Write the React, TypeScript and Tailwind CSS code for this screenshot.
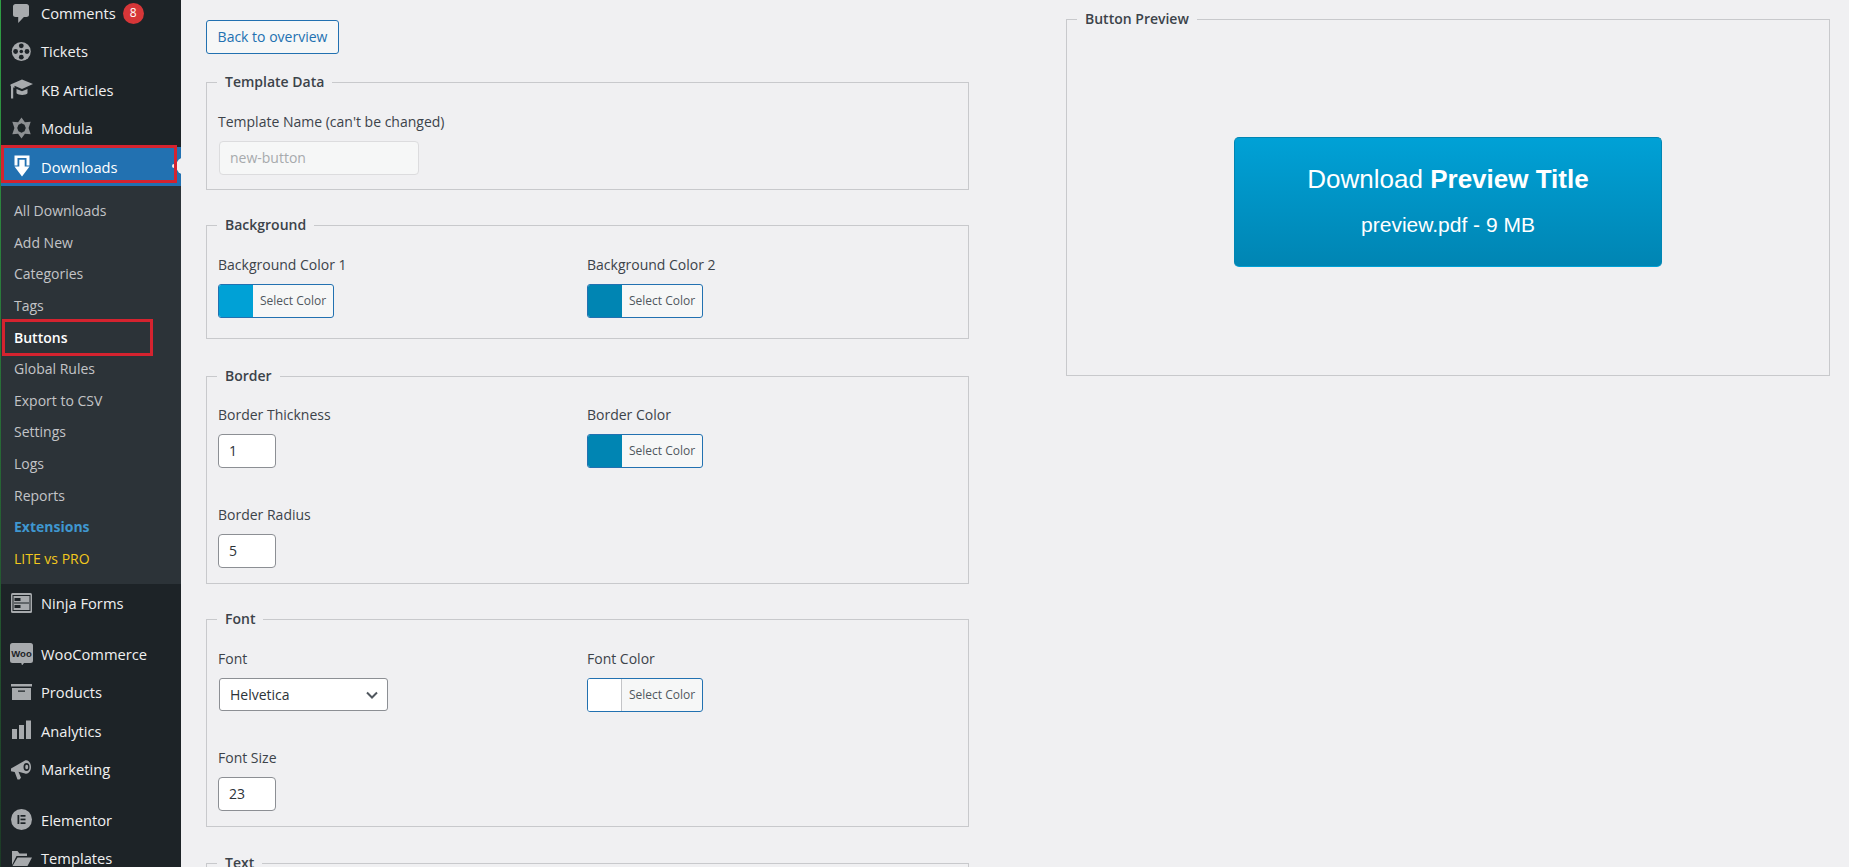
import React from "react";

const G = "#a7aaad";
const D = "#1d2327";

const I = ({ children }: { children: React.ReactNode }) => (
  <svg width="23" height="23" viewBox="0 0 23 23" className="shrink-0">
    {children}
  </svg>
);

const icons: Record<string, React.ReactNode> = {
  comments: (
    <path fill={G} d="M5.5 2h11c1.3 0 2.5 1 2.5 2.3v8.4c0 1.3-1.2 2.3-2.5 2.3h-2.6l-5.7 6v-6H5.500C4.200 15 3 14 3 12.700V4.300C3 3 4.200 2 5.500 2z" />
  ),
  tickets: (
    <g>
      <circle cx="11.300" cy="11.500" r="9.500" fill={G} />
      <circle cx="11.300" cy="11.500" r="1.800" fill={D} />
      <circle cx="11.300" cy="5.800" r="2.400" fill={D} />
      <circle cx="11.300" cy="17.200" r="2.400" fill={D} />
      <circle cx="5.600" cy="11.500" r="2.400" fill={D} />
      <circle cx="17" cy="11.500" r="2.400" fill={D} />
    </g>
  ),
  kb: (
    <g fill={G}>
      <path d="M0.500 6.500 12 1.500l11 4.500-11 5-7.500-3.200V10L0.500 8z" />
      <path d="M1 7.500h2.200v13H1z" />
      <path d="M6.500 11v4.200c2 2.300 9.500 2.300 11 0V11L12 13.300z" />
    </g>
  ),
  modula: (
    <path
      fill="#8d9093"
      fillRule="evenodd"
      d="M11.500 0.500l3.400 4.700 5.800-.4-2.100 6.200 2.100 6.200-5.800-.4-3.400 4.700-3.400-4.700-5.800.4 2.100-6.200-2.100-6.200 5.800.4zM8.500 7.800l-1.300 3.200 1.300 3.200 3 1.500 3-1.500 1.300-3.200-1.300-3.200-3-1.500z"
    />
  ),
  download: (
    <g fill="#fff">
      <path d="M4.500 .5h15v10h-3V3H7.500v7.500h-3z" />
      <path d="M9.300 4.800h5.400v6.700h4.800L12 21.500 4.500 11.500h4.800z" />
    </g>
  ),
  ninja: (
    <g>
      <rect x="1" y="1" width="21" height="20" rx="1.500" fill={G} />
      <rect x="3" y="3.500" width="17" height="15" fill="none" stroke={D} strokeWidth="1" />
      <rect x="4.500" y="6" width="6" height="3" fill={D} />
      <rect x="4.500" y="13" width="6" height="3" fill={D} />
      <rect x="4" y="10.500" width="15" height="1" fill={D} />
    </g>
  ),
  woo: (
    <g>
      <path fill={G} d="M2.500 1h18A2.500 2.500 0 0 1 23 3.500v15a2.500 2.500 0 0 1-2.500 2.500H14l-2 2.500-.7-2.500H2.500A2.500 2.500 0 0 1 0 18.500v-15A2.500 2.500 0 0 1 2.500 1z" />
      <text x="11.500" y="15" textAnchor="middle" fontSize="9.500" fontWeight="700" fill={D} fontFamily="'Liberation Sans', sans-serif">
        Woo
      </text>
    </g>
  ),
  products: (
    <g fill={G}>
      <rect x="1" y="3" width="21" height="2.500" />
      <path d="M2 7h19v12H2zM8 9.500v1.300h7V9.500z" fillRule="evenodd" />
    </g>
  ),
  analytics: (
    <g fill={G}>
      <rect x="2" y="10" width="5" height="10" />
      <rect x="9" y="6" width="5" height="14" />
      <rect x="16" y="1.500" width="5" height="18.500" />
    </g>
  ),
  marketing: (
    <g>
      <path fill={G} d="M1 10.500 15 2.500c3-1 6 2 6 6.500s-3 7.500-6 6.500l-6.500-1.700 2.500 6-1.500 1.700H7.500l-2.800-7.500-3.700-.8z" />
      <ellipse cx="16.500" cy="9" rx="3" ry="4" fill={D} />
      <ellipse cx="16.700" cy="9" rx="1.500" ry="2.200" fill={G} />
    </g>
  ),
  elementor: (
    <g>
      <circle cx="11.500" cy="11.500" r="10.500" fill={G} />
      <rect x="7.500" y="7" width="1.800" height="9" fill={D} />
      <rect x="10.500" y="7" width="5" height="1.700" fill={D} />
      <rect x="10.500" y="10.600" width="5" height="1.700" fill={D} />
      <rect x="10.500" y="14.300" width="5" height="1.700" fill={D} />
    </g>
  ),
  templates: (
    <g fill={G}>
      <path d="M2 18V4h5.500l2 2.500H17V9H6.500z" />
      <path d="M7.500 10.500H22L17.500 19H2.500z" />
    </g>
  ),
};

function Item({ icon, label, badge, active }: { icon: string; label: string; badge?: string; active?: boolean }) {
  return (
    <div className={`relative flex h-[38.4px] shrink-0 items-center pl-[10px] text-[14.700px] ${active ? "bg-[#2271b1] text-white" : "text-[#f0f0f1]"}`}>
      <I>{icons[icon]}</I>
      <span className="ml-[8px]">{label}</span>
      {badge && (
        <span className="ml-[7px] flex h-[21px] w-[21px] items-center justify-center rounded-full bg-[#d63638] text-[12px] text-white">
          {badge}
        </span>
      )}
      {active && (
        <>
          <span className="absolute left-[172px] top-[17px] h-[4px] w-[4px] rounded-full bg-[#f0f0f2]" />
          <span className="absolute left-[176px] top-[10px] h-[18px] w-[10px] rounded-l-full bg-[#f0f0f2]" />
          <span className="absolute left-[1px] top-[-2px] h-[38px] w-[176px] border-[3px] border-[#d5232f]" />
        </>
      )}
    </div>
  );
}

function Sub({ label, className = "text-[#c3c4c7]", boxed }: { label: string; className?: string; boxed?: boolean }) {
  return (
    <div className={`relative flex h-[31.640px] items-center pl-[14px] ${className}`}>
      {label}
      {boxed && <span className="absolute left-[2px] top-[-2px] h-[37px] w-[151px] border-[3px] border-[#d5232f]" />}
    </div>
  );
}

function Box({ title, className = "", children }: { title: string; className?: string; children: React.ReactNode }) {
  return (
    <fieldset className={`border border-[#c8c9cc] px-[11px] ${className}`}>
      <legend className="ml-[-1px] h-[20px] px-[8px] text-[14px] font-semibold leading-[20px] text-[#3c434a]">{title}</legend>
      {children}
    </fieldset>
  );
}

const Label = ({ children }: { children: React.ReactNode }) => (
  <div className="h-[20px] text-[14px] leading-[20px] text-[#3c434a]">{children}</div>
);

function Swatch({ color, white }: { color: string; white?: boolean }) {
  return (
    <div className="mt-[9px] flex h-[34px] w-[116px] overflow-hidden rounded-[3px] border border-[#2271b1] bg-[#f6f7f7]">
      <div className={`h-full w-[34px] ${white ? "border-r border-[#c3c4c7]" : ""}`} style={{ background: color }} />
      <div className="flex-1 pl-[7px] text-[12px] leading-[32px] text-[#50575e]">Select Color</div>
    </div>
  );
}

const NumberBox = ({ value }: { value: string }) => (
  <div className="mt-[9px] h-[34px] w-[58px] rounded-[4px] border border-[#8c8f94] bg-white pl-[10px] text-[14px] leading-[32px] text-[#2c3338]">
    {value}
  </div>
);

export default function App() {
  return (
    <div className="relative flex h-[867px] w-[1849px] overflow-hidden bg-[#f0f0f2] font-['Open_Sans',sans-serif] text-[14px]">
      <aside className="relative w-[181px] shrink-0 bg-[#1d2327]">
        <div className="mt-[-6.200px] flex flex-col">
          <Item icon="comments" label="Comments" badge="8" />
          <Item icon="tickets" label="Tickets" />
          <Item icon="kb" label="KB Articles" />
          <Item icon="modula" label="Modula" />
          <Item icon="download" label="Downloads" active />
          <div className="bg-[#2c3338] pb-[10px] pt-[9px] text-[14px]">
            <Sub label="All Downloads" />
            <Sub label="Add New" />
            <Sub label="Categories" />
            <Sub label="Tags" />
            <Sub label="Buttons" className="font-semibold text-white" boxed />
            <Sub label="Global Rules" />
            <Sub label="Export to CSV" />
            <Sub label="Settings" />
            <Sub label="Logs" />
            <Sub label="Reports" />
            <Sub label="Extensions" className="font-bold text-[#3f97d0]" />
            <Sub label="LITE vs PRO" className="text-[#f2c81d]" />
          </div>
          <Item icon="ninja" label="Ninja Forms" />
          <div className="mt-[12px]">
            <Item icon="woo" label="WooCommerce" />
          </div>
          <Item icon="products" label="Products" />
          <Item icon="analytics" label="Analytics" />
          <Item icon="marketing" label="Marketing" />
          <div className="mt-[12.500px]">
            <Item icon="elementor" label="Elementor" />
          </div>
          <Item icon="templates" label="Templates" />
        </div>
        <div className="absolute left-0 top-0 h-full w-[1px] bg-gradient-to-b from-[#2f9e44] to-[#1c3a26]" />
      </aside>

      <main className="flex items-start gap-[97px] pl-[25px]">
        <div className="w-[763px] pt-[20px]">
          <div className="h-[34px] w-[133px] rounded-[3px] border border-[#2271b1] bg-[#f6f7f7] text-center text-[14px] leading-[32px] text-[#2271b1]">
            Back to overview
          </div>

          <Box title="Template Data" className="mt-[18px] pb-[14px]">
            <div className="mt-[20px]">
              <Label>Template Name (can't be changed)</Label>
              <div className="ml-[1px] mt-[9px] h-[34px] w-[200px] rounded-[4px] border border-[#dcdcde] bg-[#f6f7f7] pl-[10px] text-[14px] leading-[32px] text-[#a7aaad]">
                new-button
              </div>
            </div>
          </Box>

          <Box title="Background" className="mt-[25px] pb-[20px]">
            <div className="mt-[20px] grid grid-cols-[369px_1fr]">
              <div>
                <Label>Background Color 1</Label>
                <Swatch color="#00a1d6" />
              </div>
              <div>
                <Label>Background Color 2</Label>
                <Swatch color="#0085b3" />
              </div>
            </div>
          </Box>

          <Box title="Border" className="mt-[27px] pb-[15px]">
            <div className="mt-[19px] grid grid-cols-[369px_1fr] gap-y-[37px]">
              <div>
                <Label>Border Thickness</Label>
                <NumberBox value="1" />
              </div>
              <div>
                <Label>Border Color</Label>
                <Swatch color="#0085b3" />
              </div>
              <div>
                <Label>Border Radius</Label>
                <NumberBox value="5" />
              </div>
            </div>
          </Box>

          <Box title="Font" className="mt-[25px] pb-[15px]">
            <div className="mt-[20px] grid grid-cols-[369px_1fr] gap-y-[36px]">
              <div>
                <Label>Font</Label>
                <div className="ml-[1px] mt-[9px] flex h-[33px] w-[169px] items-center justify-between rounded-[3px] border border-[#8c8f94] bg-white pl-[10px] pr-[8px] text-[14px] text-[#2c3338]">
                  Helvetica
                  <svg width="14" height="14" viewBox="0 0 14 14">
                    <path d="M2 4.500 7 9.500 12 4.500" fill="none" stroke="#50575e" strokeWidth="2" />
                  </svg>
                </div>
              </div>
              <div>
                <Label>Font Color</Label>
                <Swatch color="#ffffff" white />
              </div>
              <div>
                <Label>Font Size</Label>
                <NumberBox value="23" />
              </div>
            </div>
          </Box>

          <Box title="Text" className="mt-[26px] h-[100px]">
            <div />
          </Box>
        </div>

        <div className="w-[764px] pt-[9px]">
          <Box title="Button Preview" className="h-[367px]">
            <div className="flex h-[345px] items-center justify-center">
              <div className="flex h-[130px] w-[428px] flex-col items-center rounded-[5px] border border-[#0085b3] border-b-[#00a1d6] bg-gradient-to-b from-[#00a1d6] to-[#0085b3] pt-[25px] font-['Liberation_Sans',Arial,sans-serif] text-white">
                <div className="text-[26px] leading-[32px]">
                  Download <b>Preview Title</b>
                </div>
                <div className="mt-[18px] text-[21px] leading-[24px]">preview.pdf - 9 MB</div>
              </div>
            </div>
          </Box>
        </div>
      </main>
    </div>
  );
}
